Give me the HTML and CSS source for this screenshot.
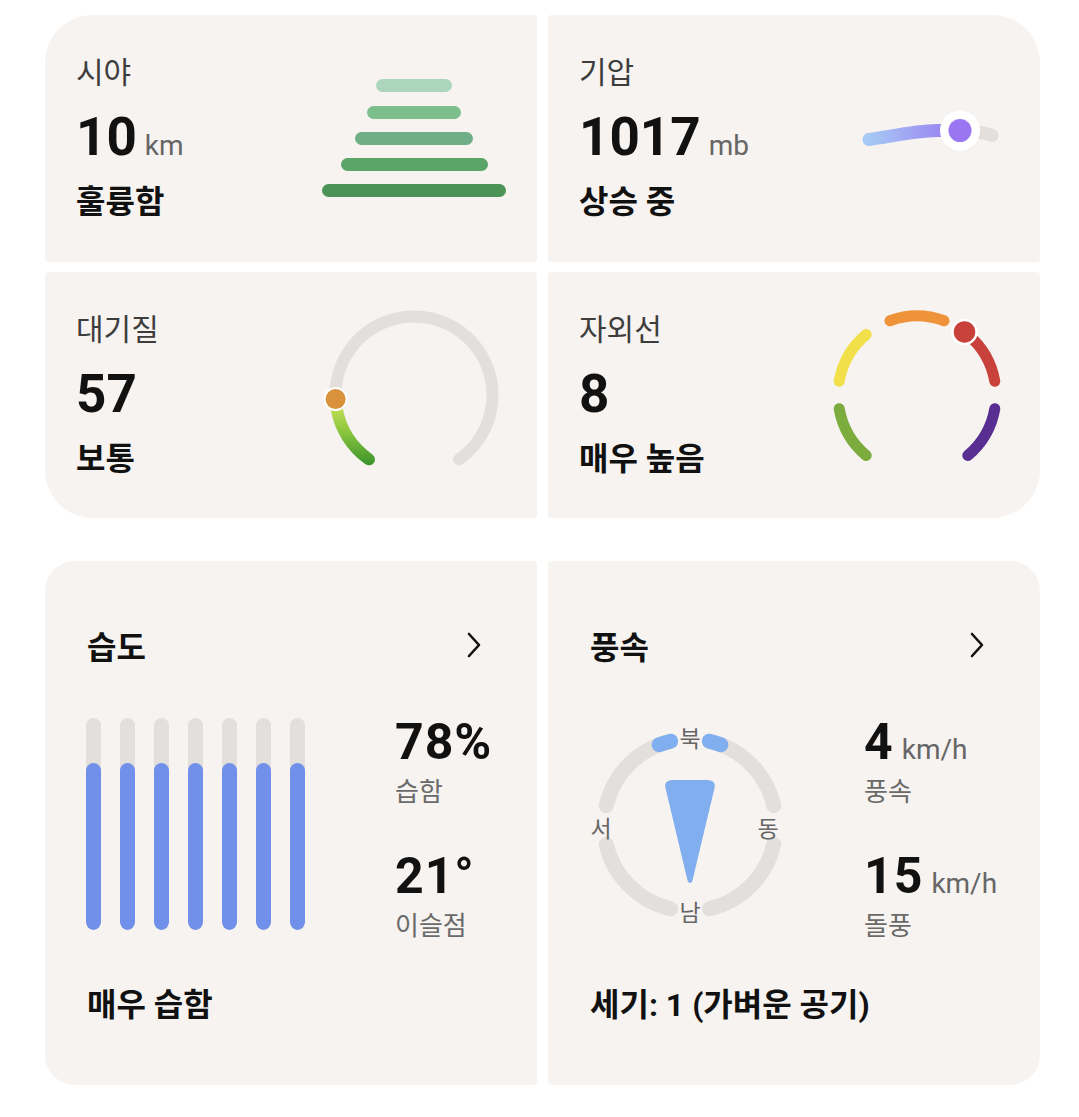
FILE: index.html
```html
<!DOCTYPE html>
<html lang="ko">
<head>
    <meta charset="UTF-8">
    <meta name="viewport" content="width=device-width, initial-scale=1.0">
    <title>날씨 상세</title>
    <link rel="stylesheet" href="styles.css">
</head>
<body>
    <div class="page">
        <!-- small tiles: visibility, pressure, air quality, uv -->
        <section class="tiles">
            <div class="tile tile-tl">
                <div class="tile-info">
                    <div class="tile-label">시야</div>
                    <div class="tile-value">10<span class="unit">km</span></div>
                    <div class="tile-status">훌륭함</div>
                </div>
                <svg class="tile-graphic" viewBox="0 0 200 200">
                    <g stroke-width="13" stroke-linecap="round">
                        <line x1="68.5" y1="46.5" x2="131.5" y2="46.5" stroke="#acd6bb"/>
                        <line x1="59.5" y1="73.5" x2="140.5" y2="73.5" stroke="#7dbe8d"/>
                        <line x1="47.5" y1="99.5" x2="152.5" y2="99.5" stroke="#6fae86"/>
                        <line x1="33.5" y1="125.5" x2="167.5" y2="125.5" stroke="#5ba568"/>
                        <line x1="14.5" y1="151.5" x2="185.5" y2="151.5" stroke="#4b9357"/>
                    </g>
                </svg>
            </div>

            <div class="tile tile-tr">
                <div class="tile-info">
                    <div class="tile-label">기압</div>
                    <div class="tile-value">1017<span class="unit">mb</span></div>
                    <div class="tile-status">상승 중</div>
                </div>
                <svg class="tile-graphic" viewBox="0 0 200 200">
                    <defs>
                        <linearGradient id="pressureFill" x1="0" y1="0" x2="1" y2="0">
                            <stop offset="0" stop-color="#a6c9f5"/>
                            <stop offset="1" stop-color="#9879f1"/>
                        </linearGradient>
                    </defs>
                    <path d="M143 91.5 C158 91.5 167 93.5 175 96.5" fill="none" stroke="#e2dfdc" stroke-width="13" stroke-linecap="round"/>
                    <path d="M52 100.5 C74 97.5 96 92 120 91.5 L143 91.5" fill="none" stroke="url(#pressureFill)" stroke-width="13" stroke-linecap="round"/>
                    <circle cx="143" cy="91.5" r="20" fill="#ffffff"/>
                    <circle cx="143" cy="91.5" r="11.5" fill="#9a76f2"/>
                </svg>
            </div>

            <div class="tile tile-bl">
                <div class="tile-info">
                    <div class="tile-label">대기질</div>
                    <div class="tile-value">57</div>
                    <div class="tile-status">보통</div>
                </div>
                <svg class="tile-graphic" viewBox="0 0 200 200">
                    <defs>
                        <linearGradient id="airFill" x1="0" y1="105" x2="0" y2="168" gradientUnits="userSpaceOnUse">
                            <stop offset="0" stop-color="#cfe65c"/>
                            <stop offset="0.5" stop-color="#8cc63f"/>
                            <stop offset="1" stop-color="#3f962c"/>
                        </linearGradient>
                    </defs>
                    <path d="M54.97 164.31 A78.5 78.5 0 1 1 145.03 164.31" fill="none" stroke="#e2dfdc" stroke-width="12" stroke-linecap="round"/>
                    <path d="M54.97 164.31 A78.5 78.5 0 0 1 22.69 113.63" fill="none" stroke="url(#airFill)" stroke-width="12" stroke-linecap="round"/>
                    <circle cx="21.6" cy="104.1" r="11" fill="#d9913b" stroke="#fff" stroke-width="2"/>
                </svg>
            </div>

            <div class="tile tile-br">
                <div class="tile-info">
                    <div class="tile-label">자외선</div>
                    <div class="tile-value">8</div>
                    <div class="tile-status">매우 높음</div>
                </div>
                <svg class="tile-graphic" viewBox="0 0 200 200">
                    <g fill="none" stroke-width="11" stroke-linecap="round">
                        <path d="M49.22 160.52 A79 79 0 0 1 22.2 113.72" stroke="#7cab3e"/>
                        <path d="M22.2 86.28 A79 79 0 0 1 49.22 39.48" stroke="#f2e04b"/>
                        <path d="M72.98 25.76 A79 79 0 0 1 127.02 25.76" stroke="#ee9339"/>
                        <path d="M150.78 39.48 A79 79 0 0 1 177.8 86.28" stroke="#c8423b"/>
                        <path d="M177.8 113.72 A79 79 0 0 1 150.78 160.52" stroke="#582e92"/>
                    </g>
                    <circle cx="147.5" cy="36.9" r="12" fill="#c8423b" stroke="#fff" stroke-width="2.5"/>
                </svg>
            </div>
        </section>

        <!-- detail panels: humidity, wind -->
        <section class="panels">
            <div class="panel panel-left">
                <div class="panel-head">
                    <span>습도</span>
                    <svg class="chevron" viewBox="0 0 16 26"><polyline points="3,2 13,13 3,24"/></svg>
                </div>
                <div class="panel-body">
                    <div class="bars">
                        <div class="bar"><div class="bar-fill" style="height: 79%"></div></div>
                        <div class="bar"><div class="bar-fill" style="height: 79%"></div></div>
                        <div class="bar"><div class="bar-fill" style="height: 79%"></div></div>
                        <div class="bar"><div class="bar-fill" style="height: 79%"></div></div>
                        <div class="bar"><div class="bar-fill" style="height: 79%"></div></div>
                        <div class="bar"><div class="bar-fill" style="height: 79%"></div></div>
                        <div class="bar"><div class="bar-fill" style="height: 79%"></div></div>
                    </div>
                    <div class="stats">
                        <div class="stat-value">78%</div>
                        <div class="stat-label">습함</div>
                        <div class="stat-value stat-gap">21°</div>
                        <div class="stat-label">이슬점</div>
                    </div>
                </div>
                <div class="panel-foot">매우 습함</div>
            </div>

            <div class="panel panel-right">
                <div class="panel-head">
                    <span>풍속</span>
                    <svg class="chevron" viewBox="0 0 16 26"><polyline points="3,2 13,13 3,24"/></svg>
                </div>
                <div class="panel-body">
                    <div class="compass-cell">
                        <svg class="compass" viewBox="-10 -10 220 220">
                            <g fill="none" stroke-width="15" stroke-linecap="round">
                                <path d="M119.35 16.2 A86 86 0 0 1 183.8 80.65" stroke="#e2dfdc"/>
                                <path d="M183.8 119.35 A86 86 0 0 1 119.35 183.8" stroke="#e2dfdc"/>
                                <path d="M80.65 183.8 A86 86 0 0 1 16.2 119.35" stroke="#e2dfdc"/>
                                <path d="M16.2 80.65 A86 86 0 0 1 80.65 16.2" stroke="#e2dfdc"/>
                                <path d="M69.18 19.71 A86 86 0 0 1 80.65 16.2" stroke="#80aeef"/>
                                <path d="M119.35 16.2 A86 86 0 0 1 130.82 19.71" stroke="#80aeef"/>
                            </g>
                            <path d="M75.5 63 C74 57 78 55 84 55 L116 55 C122 55 126 57 124.5 63 L102.6 155 C101.6 159 98.4 159 97.4 155 Z" fill="#80aeef"/>
                            <g class="compass-text">
                                <text x="100" y="12">북</text>
                                <text x="178" y="102">동</text>
                                <text x="100" y="186">남</text>
                                <text x="11" y="102">서</text>
                            </g>
                        </svg>
                    </div>
                    <div class="stats">
                        <div class="stat-value">4<span class="unit">km/h</span></div>
                        <div class="stat-label">풍속</div>
                        <div class="stat-value stat-gap">15<span class="unit">km/h</span></div>
                        <div class="stat-label">돌풍</div>
                    </div>
                </div>
                <div class="panel-foot">세기: 1 (가벼운 공기)</div>
            </div>
        </section>
    </div>
</body>
</html>
```

FILE: styles.css
```css
* {
    box-sizing: border-box;
    margin: 0;
    padding: 0;
}
body {
    background-color: #ffffff;
    font-family: Roboto, "Noto Sans CJK KR", sans-serif;
    color: #111111;
}
.page {
    padding: 15px 39px 0 45px;
}

/* tiles */
.tiles {
    display: grid;
    grid-template-columns: 492px 492px;
    grid-template-rows: 247px 246px;
    gap: 10px 11px;
}
.tile {
    display: flex;
    align-items: center;
    background-color: #f6f3f0;
    border-radius: 4px;
    padding: 0 23px 0 31px;
}
.tile-tl { border-top-left-radius: 48px; }
.tile-tr { border-top-right-radius: 48px; }
.tile-bl { border-bottom-left-radius: 48px; }
.tile-br { border-bottom-right-radius: 48px; }
.tile-info {
    flex: 1;
    align-self: flex-start;
    padding-top: 25px;
}
.tile-label {
    font-size: 30px;
    line-height: 65px;
    color: #3d3d3d;
}
.tile-value {
    font-size: 53px;
    font-weight: 700;
    line-height: 65px;
}
.unit {
    font-size: 28px;
    font-weight: 400;
    line-height: 1;
    letter-spacing: 0;
    color: #666666;
    margin-left: 8px;
}
.tile-status {
    font-size: 32px;
    font-weight: 700;
    line-height: 65px;
}
.tile-graphic {
    width: 200px;
    height: 200px;
    flex-shrink: 0;
}

/* panels */
.panels {
    display: grid;
    grid-template-columns: 492px 492px;
    gap: 11px;
    margin-top: 43px;
}
.panel {
    height: 524px;
    background-color: #f6f3f0;
    border-radius: 4px;
    padding: 60px 55px 0 42px;
}
.panel-left {
    border-top-left-radius: 30px;
    border-bottom-left-radius: 30px;
}
.panel-right {
    border-top-right-radius: 30px;
    border-bottom-right-radius: 30px;
}
.panel-head {
    display: flex;
    justify-content: space-between;
    align-items: center;
    height: 48px;
    font-size: 32px;
    font-weight: 700;
}
.chevron {
    width: 16px;
    height: 26px;
}
.chevron polyline {
    fill: none;
    stroke: #111111;
    stroke-width: 2.6;
    stroke-linecap: round;
    stroke-linejoin: round;
}
.panel-body {
    display: flex;
    height: 250px;
    margin-top: 31px;
}
.panel-foot {
    margin-top: 35px;
    font-size: 32px;
    font-weight: 700;
    line-height: 40px;
}

/* humidity bars */
.bars {
    display: flex;
    flex-shrink: 0;
    gap: 19px;
    width: 309px;
    height: 230px;
    padding-top: 18px;
    margin-left: -1px;
}
.bar {
    display: flex;
    flex-direction: column;
    justify-content: flex-end;
    width: 15px;
    height: 212px;
    border-radius: 8px;
    background-color: #e2dfdc;
    overflow: hidden;
}
.bar-fill {
    border-radius: 8px;
    background-color: #7090ea;
}

/* wind compass */
.compass-cell {
    flex-shrink: 0;
    width: 274px;
}
.compass {
    width: 220px;
    height: 220px;
    margin: 15px 0 0 -10px;
}
.compass-text text {
    font-family: "Noto Sans CJK KR", sans-serif;
    font-size: 23px;
    fill: #666666;
    text-anchor: middle;
    dominant-baseline: central;
}

/* stats */
.stats {
    padding-top: 12px;
    white-space: nowrap;
}
.stat-value {
    font-size: 50px;
    font-weight: 700;
    line-height: 60px;
    letter-spacing: 1px;
}
.stat-label {
    font-size: 26px;
    line-height: 40px;
    color: #6a6a6a;
}
.stat-gap {
    margin-top: 34px;
}
```
